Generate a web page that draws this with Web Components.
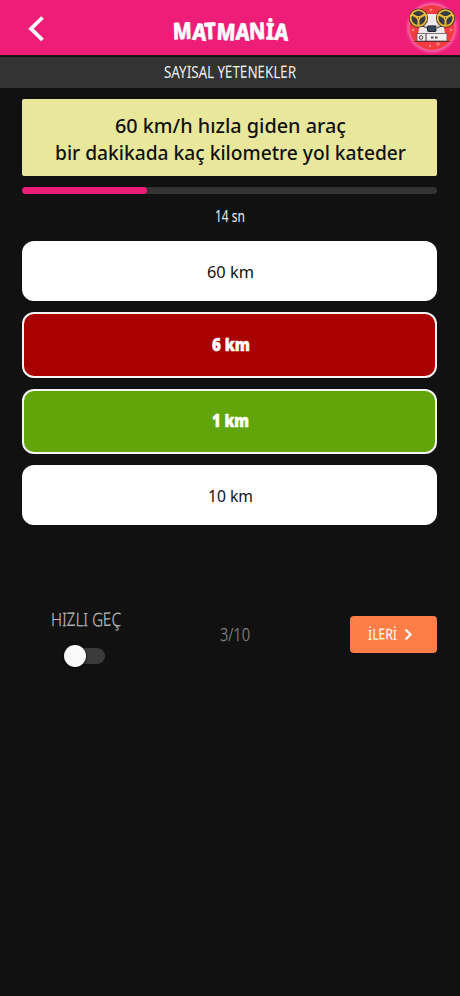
<!DOCTYPE html>
<html lang="tr">
<head>
<meta charset="utf-8">
<title>Matmania</title>
<style>html,body{margin:0;background:#111;color:#fff;font-family:"Noto Sans",sans-serif}</style>
</head>
<body>
<quiz-app></quiz-app>
<script>
const define = (name, html, setup) => customElements.define(name, class extends HTMLElement {
  connectedCallback() {
    if (this.shadowRoot) return;
    const root = this.attachShadow({mode: 'open'});
    root.innerHTML = html;
    if (setup) setup(this, root);
  }
});

/* One line of text set to a given width; height is the line box, base the baseline in it. */
define('fit-text', `<style>:host{display:block;flex:none}svg{display:block;overflow:visible}text{fill:currentColor;stroke:currentColor;stroke-linejoin:round;stroke-width:0}</style><svg><text lengthAdjust="spacingAndGlyphs"></text></svg>`, (el, root) => {
  const a = n => el.getAttribute(n), svg = root.querySelector('svg'), t = root.querySelector('text');
  svg.setAttribute('width', a('w')); svg.setAttribute('height', a('h'));
  t.setAttribute('y', a('base')); t.setAttribute('textLength', a('w'));
  t.style.fontSize = a('size') + 'px';
  t.style.fontWeight = a('weight') || 400;
  t.style.strokeWidth = a('stroke') || 0;
  if (a('tilt')) t.setAttribute('rotate', a('tilt'));
  t.textContent = a('text');
});

define('tape-logo', `<style>:host{display:block;width:60px;height:56px}svg{display:block;overflow:visible}</style>
<svg width="60" height="56" viewBox="0 0 60 56">
 <defs><radialGradient id="g"><stop offset=".78" stop-color="#ff8fc0"/><stop offset="1" stop-color="#ff5fa5" stop-opacity="0"/></radialGradient></defs>
 <circle cx="32" cy="27.5" r="27" fill="url(#g)"/><circle cx="32" cy="27.5" r="22.5" fill="#f23b40"/>
 <g fill="none" stroke="#ff9a8e" stroke-width="1"><circle cx="31" cy="10" r="1"/><circle cx="13" cy="30" r="1"/><circle cx="51" cy="30" r="1"/><circle cx="38" cy="44" r="1.3"/><circle cx="30" cy="46" r=".7"/></g>
 <path d="M22 14h20l3 20H18z" fill="#eee9ea"/><path d="M20 26h24" stroke="#c5bdc0" stroke-width="1.5"/>
 <rect x="17" y="33.5" width="30" height="7.5" fill="#f4eff0" stroke="#6b5258" stroke-width=".8"/><path d="M26 34v7" stroke="#4b3238"/>
 <path d="M14 41.5h36" stroke="#672c32"/><circle cx="21" cy="37.5" r="1.8" fill="none" stroke="#4b3238"/><path d="M31 37.5h2.5M35 37.5h2.5" stroke="#58484d" stroke-width="2"/>
 <path d="M20 25l7 3M44 25l-7 3" stroke="#3a3138"/><rect x="27.5" y="26" width="8.500" height="5.500" rx="1" fill="#34495e" stroke="#222"/>
 <g id="r"><circle cx="18.500" cy="18" r="8.400" fill="#343b42" stroke="#352c24" stroke-width="2.400"/><circle cx="18.500" cy="18" r="7.900" fill="none" stroke="#e9b93a" stroke-width="1.900"/><path d="M18.500 18v7M18.500 18l-6.500-3.500M18.500 18l6.500-3.500" stroke="#e9b93a" stroke-width="2"/><circle cx="18.500" cy="18" r="2" fill="#f1c443"/><circle cx="18.500" cy="18" r=".7" fill="#333"/></g>
 <use href="#r" x="27"/>
</svg>`);

define('app-header', `<style>:host{display:grid;grid-template-columns:60px 1fr 60px;height:56px;background:#ed1d78;box-sizing:border-box;border-bottom:1px solid #251018;overflow:hidden}.back{padding:16px 0 0 27px}.title{padding-left:113px}svg{display:block}</style>
<div class="back"><svg width="18" height="26"><path d="M15.500 1.500L4 12.700L15.500 24" fill="none" stroke="#fff" stroke-width="3.800"/></svg></div>
<div class="title"><fit-text text="MATMANİA" w="115" h="55" base="39.500" size="23" weight="800" stroke=".6" tilt="-2 5 -3 3 4 -2 2 5"></fit-text></div>
<tape-logo></tape-logo>`);

define('category-bar', `<style>:host{display:flex;justify-content:center;height:31px;margin-top:1px;background:#333;color:#eee}</style>
<fit-text text="SAYISAL YETENEKLER" w="132" h="31" base="21" size="17" weight="400" tilt="0 2 0 1 0 3 1 0 0 -2 0 -2 1 -1 0 2 -2 1"></fit-text>`);

define('question-card', `<style>:host{display:flex;flex-direction:column;align-items:center;box-sizing:border-box;height:77px;padding-left:1.500px;border-radius:2px;background:#e9e79c;color:#111}</style>
<fit-text text="60 km/h hızla giden araç" w="231" h="39" base="33.500" size="20" weight="500"></fit-text>
<fit-text text="bir dakikada kaç kilometre yol kateder" w="351" h="38" base="21.500" size="20" weight="500"></fit-text>`);

define('time-bar', `<style>:host{display:block;height:7px;margin-top:11px;border-radius:3.5px;background:#333;overflow:hidden}div{width:30%;height:100%;border-radius:3.5px;background:#ed1d78}</style><div></div>`);

define('answer-option', `<style>:host{display:flex;align-items:center;justify-content:center;box-sizing:border-box;height:60px;padding-left:1.500px;border-radius:12px;background:#fff;color:#111}:host([state]){height:65.500px;border:2px solid #f4f4f4;color:#fff}:host([state=wrong]){background:#a90000}:host([state=right]){background:#61a50b}</style><slot></slot>`);

define('quick-switch', `<style>:host{display:flex;flex-direction:column;align-items:flex-start;width:82px;color:#bbb}fit-text{margin-left:6px}.track{display:flex;align-items:center;box-sizing:border-box;width:40px;height:16px;border-radius:8px;background:#3b3b3b;margin:16px 0 0 20px}.thumb{width:22px;height:22px;flex:none;border-radius:50%;background:#fafafa;box-shadow:0 1px 3px #000;margin-left:-1px}</style>
<fit-text text="HIZLI GEÇ" w="70" h="24" base="18" size="18.500" weight="300" stroke=".25" tilt="0 1 -2 2 0 0 2 -2 1"></fit-text><div class="track"><div class="thumb"></div></div>`);

define('next-button', `<style>:host{display:flex;align-items:center;box-sizing:border-box;width:87px;height:37px;padding-left:18px;gap:7px;border-radius:4px;background:#ff7d47;color:#fff}svg{display:block}</style>
<fit-text text="İLERİ" w="29" h="37" base="23.500" size="15" weight="400" tilt="0 2 -2 1 0"></fit-text><svg width="9" height="13"><path d="M1.500 1.500L6.500 6.500L1.500 11.500" fill="none" stroke="#fff" stroke-width="2.200"/></svg>`);

define('quiz-app', `<style>:host{display:block;width:460px;height:996px;overflow:hidden;background:#111}main{padding:11px 22.600px 0 22.400px}.sec{display:flex;justify-content:center;height:47px;color:#eee}.list{display:flex;flex-direction:column;gap:11px}footer{display:flex;justify-content:space-between;align-items:flex-start;margin-top:83px;padding-left:22.500px}.count{color:#858585;padding:12px 7px 0 0}next-button{margin-top:7.500px}</style>
<app-header></app-header><category-bar></category-bar>
<main><question-card></question-card><time-bar></time-bar>
<div class="sec"><fit-text text="14 sn" w="30" h="47" base="28" size="16.500" weight="400"></fit-text></div>
<div class="list">
<answer-option><fit-text text="60 km" w="47" h="60" base="37" size="16.500"></fit-text></answer-option>
<answer-option state="wrong"><fit-text text="6 km" w="38" h="62" base="37" size="17" weight="900" stroke=".5"></fit-text></answer-option>
<answer-option state="right"><fit-text text="1 km" w="37" h="62" base="37" size="17" weight="900" stroke=".5"></fit-text></answer-option>
<answer-option><fit-text text="10 km" w="45" h="60" base="37" size="16.500"></fit-text></answer-option>
</div>
<footer><quick-switch></quick-switch><div class="count"><fit-text text="3/10" w="30" h="30" base="20.500" size="17.500" weight="300" stroke=".25"></fit-text></div><next-button></next-button></footer></main>`);
</script>
</body>
</html>
